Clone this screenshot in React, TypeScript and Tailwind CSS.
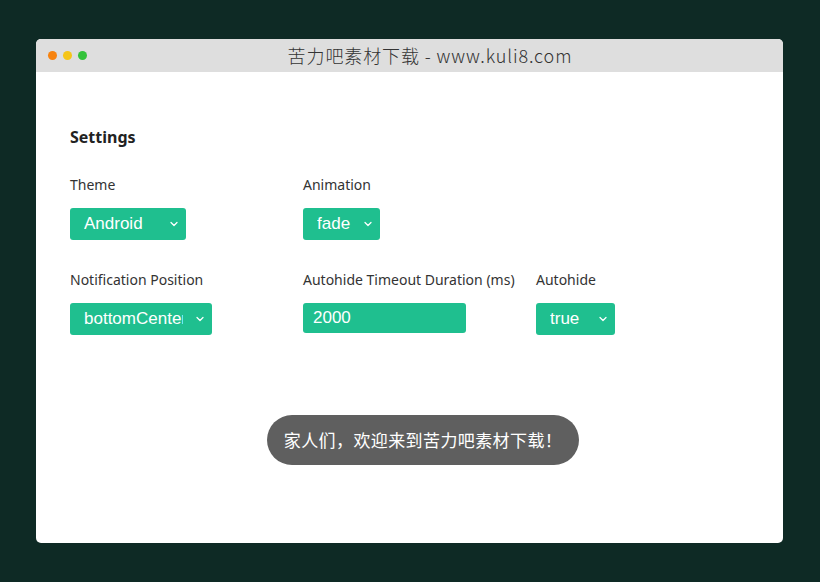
import { ChevronDown } from 'lucide-react'

const SANS = 'font-["Noto_Sans","Noto_Sans_CJK_SC",sans-serif]'

function GreenSelect({ value, width }: { value: string; width: string }) {
  return (
    <div
      className={`${width} h-8 rounded-[3px] bg-[#1fbf8f] flex items-center pl-[14px] pr-[6px] text-white text-[17px] font-["Liberation_Sans",Arial,sans-serif]`}
    >
      <span className="flex-1 overflow-hidden whitespace-nowrap">{value}</span>
      <ChevronDown size={12} strokeWidth={2.5} className="shrink-0 ml-[11px]" />
    </div>
  )
}

function Field({ label, children }: { label: string; children: React.ReactNode }) {
  return (
    <div className="w-[233px] shrink-0 flex flex-col gap-[13px]">
      <label className={`text-sm leading-5 text-[#333] ${SANS}`}>{label}</label>
      {children}
    </div>
  )
}

export default function App() {
  return (
    <div className="w-[820px] h-[582px] bg-[#0e2a25] pt-[39px] pl-9">
      <div className="relative w-[747px] h-[504px] bg-white rounded-[5px] overflow-hidden">
        {/* title bar */}
        <div className="h-[33px] bg-[#dedede] flex items-center relative">
          <div className="flex gap-[6px] pl-3">
            <span className="w-[9px] h-[9px] rounded-full bg-[#f7830f]" />
            <span className="w-[9px] h-[9px] rounded-full bg-[#f5c518]" />
            <span className="w-[9px] h-[9px] rounded-full bg-[#33c23a]" />
          </div>
          <div className="absolute inset-0 flex items-center justify-center pl-[41px] text-[18px] tracking-[0.9px] font-light text-[#333] font-['Noto_Sans_CJK_SC','Noto_Sans',sans-serif]">
            苦力吧素材下载 - www.kuli8.com
          </div>
        </div>

        {/* settings */}
        <div className="px-[34px] pt-[55px]">
          <h2 className={`text-base leading-5 font-bold text-[#222] ${SANS}`}>Settings</h2>

          <div className="flex mt-7">
            <Field label="Theme">
              <GreenSelect value="Android" width="w-[116px]" />
            </Field>
            <Field label="Animation">
              <GreenSelect value="fade" width="w-[77px]" />
            </Field>
          </div>

          <div className="flex mt-[30px]">
            <Field label="Notification Position">
              <GreenSelect value="bottomCenter" width="w-[142px]" />
            </Field>
            <Field label="Autohide Timeout Duration (ms)">
              <input
                defaultValue="2000"
                className="w-[163px] h-[30px] rounded-[3px] bg-[#1fbf8f] px-[10px] text-white text-[17px] outline-none font-['Liberation_Sans',Arial,sans-serif]"
              />
            </Field>
            <Field label="Autohide">
              <GreenSelect value="true" width="w-[79px]" />
            </Field>
          </div>
        </div>

        {/* toast */}
        <div className="absolute left-[231px] top-[376px] w-[312px] h-[50px] rounded-full bg-[#5f5f5f] flex items-center justify-center text-white text-[17px] tracking-[0.4px] font-['Noto_Sans_CJK_SC',sans-serif]">
          家人们，欢迎来到苦力吧素材下载！
        </div>
      </div>
    </div>
  )
}
